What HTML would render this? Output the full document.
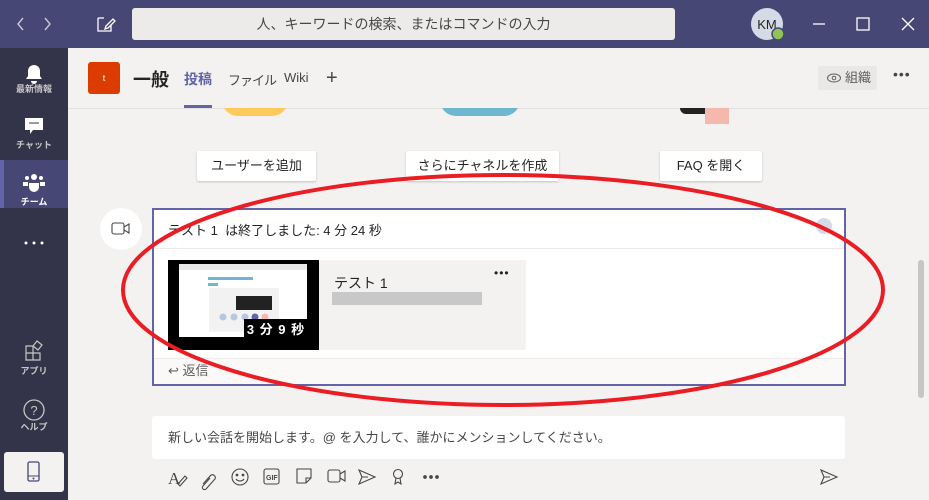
<!DOCTYPE html>
<html><head><meta charset="utf-8"><style>
*{box-sizing:border-box;margin:0;padding:0}
body{width:929px;height:500px;overflow:hidden;font-family:"Liberation Sans","Noto Sans CJK JP",sans-serif;background:#f3f2f1;position:relative;color:#252423}
.abs{position:absolute}
.top{left:0;top:0;width:929px;height:48px;background:#464775}
.search{left:132px;top:8px;width:543px;height:32px;background:#edebe9;border-radius:3px;font-size:14px;color:#484644;text-align:center;line-height:32px}
.rail{left:0;top:48px;width:68px;height:452px;background:#33344a}
.ri{position:absolute;left:0;width:68px;text-align:center;color:#c8c6c4;font-size:9px;font-weight:bold}
.btn{position:absolute;top:151px;height:30px;background:#fff;box-shadow:0 1px 2px rgba(0,0,0,.2);border-radius:2px;font-size:13px;text-align:center;line-height:30px}
</style></head><body>
<div class="abs top"></div>
<svg class="abs" style="left:0;top:0" width="929" height="48">
<path d="M23 18l-5 6 5 6M45 18l5 6-5 6" stroke="#c8c6d8" stroke-width="1.4" fill="none"/>
<path d="M98 18h6M98 18v13h13v-6M108 28l-3 1 1-3 7-7 2 2z" stroke="#fff" stroke-width="1.3" fill="none"/>
<circle cx="767" cy="24" r="16" fill="#d4dbe6"/>
<text x="767" y="29" font-size="13" text-anchor="middle" fill="#252423" font-family="Liberation Sans">KM</text>
<circle cx="778" cy="34" r="6" fill="#92c353" stroke="#464775" stroke-width="1.5"/>
<path d="M813 24h12" stroke="#fff" stroke-width="1.3"/>
<rect x="857" y="18" width="12" height="12" fill="none" stroke="#fff" stroke-width="1.3"/>
<path d="M902 18l12 12M914 18l-12 12" stroke="#fff" stroke-width="1.3"/>
</svg>
<div class="abs search">人、キーワードの検索、またはコマンドの入力</div>
<div class="abs rail"></div>
<div class="abs" style="left:0;top:160px;width:68px;height:48px;background:#464775"></div>
<div class="abs" style="left:0;top:160px;width:4px;height:48px;background:#6264a7"></div>
<svg class="abs" style="left:0;top:48px" width="68" height="452">
<path d="M28 23a6 6 0 0112 0v5l2 3H26l2-3z M31 33a3 3 0 006 0" fill="#fff"/>
<path d="M25 70h18v12h-10l-3 4v-4h-5z" fill="#fff"/><path d="M29 75h10" stroke="#33344a"/>
<circle cx="34" cy="129" r="3" fill="#fff"/><circle cx="27" cy="130" r="2" fill="#fff"/><circle cx="41" cy="130" r="2" fill="#fff"/><path d="M29 135h10v4a5 5 0 01-10 0zM23 134h5v4h-5zM40 134h5v4h-5z" fill="#fff"/>
<circle cx="26" cy="195" r="1.5" fill="#fff"/><circle cx="34" cy="195" r="1.5" fill="#fff"/><circle cx="42" cy="195" r="1.5" fill="#fff"/>
<path d="M26 298h7v7h-7zM26 305h7v7h-7zM33 305h7v7h-7zM33 298l4-5 5 4-4 5z" fill="none" stroke="#c8c6c4" stroke-width="1.2"/>
<circle cx="34" cy="362" r="10" fill="none" stroke="#c8c6c4" stroke-width="1.3"/>
<text x="34" y="367" font-size="13" text-anchor="middle" fill="#c8c6c4">?</text>
</svg>
<div class="ri" style="top:82px">最新情報</div>
<div class="ri" style="top:138px">チャット</div>
<div class="ri" style="top:195px;color:#fff">チーム</div>
<div class="ri" style="top:364px">アプリ</div>
<div class="ri" style="top:420px">ヘルプ</div>
<div class="abs" style="left:4px;top:452px;width:60px;height:40px;background:#f3f2f1;border-radius:3px"></div>
<svg class="abs" style="left:26px;top:461px" width="16" height="22"><rect x="2" y="1" width="11" height="19" rx="1.5" fill="none" stroke="#464775" stroke-width="1.3"/><path d="M2 15h11" stroke="#464775"/><circle cx="7.5" cy="17.5" r="1" fill="#464775"/></svg>

<div class="abs" style="left:68px;top:108px;width:861px;height:1px;background:#e1dfdd"></div>
<div class="abs" style="left:88px;top:62px;width:32px;height:32px;background:#dc3c00;border-radius:3px;color:#fff;font-size:9px;text-align:center;line-height:32px">t</div>
<div class="abs" style="left:133px;top:66px;font-size:18px;font-weight:bold">一般</div>
<div class="abs" style="left:184px;top:69px;font-size:14px;color:#6264a7;font-weight:bold">投稿</div>
<div class="abs" style="left:184px;top:105px;width:28px;height:3px;background:#6264a7"></div>
<div class="abs" style="left:228px;top:70px;font-size:13px;color:#484644;letter-spacing:-1px">ファイル</div>
<div class="abs" style="left:284px;top:70px;font-size:13px;color:#484644">Wiki</div>
<div class="abs" style="left:326px;top:66px;font-size:20px;color:#484644;line-height:24px">+</div>
<div class="abs" style="left:818px;top:66px;width:59px;height:24px;background:#e9e8e6;border-radius:2px;font-size:13px;color:#605e5c;line-height:24px;padding-left:27px">組織</div>
<svg class="abs" style="left:826px;top:73px" width="16" height="10"><ellipse cx="8" cy="5" rx="6.5" ry="4" fill="none" stroke="#605e5c"/><circle cx="8" cy="5" r="1.8" fill="none" stroke="#605e5c"/></svg>
<div class="abs" style="left:893px;top:66px;font-size:14px;color:#484644;letter-spacing:1px">•••</div>

<div class="abs" style="left:222px;top:100px;width:66px;height:16px;border-radius:0 0 33px 33px;background:#fdca5c;clip-path:inset(8px 0 0 0)"></div>
<div class="abs" style="left:440px;top:100px;width:80px;height:16px;border-radius:0 0 40px 40px;background:#6fb6d1;clip-path:inset(8px 0 0 0)"></div>
<div class="abs" style="left:680px;top:108px;width:30px;height:6px;background:#222;border-radius:0 0 10px 10px"></div>
<div class="abs" style="left:705px;top:108px;width:24px;height:16px;background:#f5b8ad"></div>

<div class="btn" style="left:197px;width:119px">ユーザーを追加</div>
<div class="btn" style="left:406px;width:153px">さらにチャネルを作成</div>
<div class="btn" style="left:660px;width:102px">FAQ を開く</div>

<div class="abs" style="left:100px;top:208px;width:42px;height:42px;background:#fff;border-radius:50%"></div>
<svg class="abs" style="left:110px;top:219px" width="22" height="20"><rect x="2" y="4" width="12" height="11" rx="2" fill="none" stroke="#484644" stroke-width="1.1"/><path d="M14 8l5-3v9l-5-3" fill="none" stroke="#484644" stroke-width="1.1"/></svg>
<div class="abs" style="left:152px;top:208px;width:694px;height:178px;border:2px solid #6264a7;background:#fff"></div>
<div class="abs" style="left:154px;top:248px;width:690px;height:1px;background:#edebe9"></div>
<div class="abs" style="left:168px;top:220px;font-size:13px">テスト 1&nbsp; は終了しました: 4 分 24 秒</div>
<div class="abs" style="left:816px;top:218px;width:16px;height:16px;border-radius:50%;background:#d4dbe6"></div>
<div class="abs" style="left:168px;top:260px;width:358px;height:90px;background:#f3f2f1"></div>
<div class="abs" style="left:168px;top:260px;width:151px;height:90px;background:#000"></div>
<div class="abs" style="left:179px;top:264px;width:128px;height:73px;background:#fff"></div>
<div class="abs" style="left:179px;top:264px;width:128px;height:6px;background:#e8e8e8"></div>
<div class="abs" style="left:208px;top:277px;width:45px;height:3px;background:#6fb6d1"></div>
<div class="abs" style="left:208px;top:283px;width:10px;height:3px;background:#6fb6d1"></div>
<div class="abs" style="left:209px;top:288px;width:70px;height:44px;background:#f2f2f2"></div>
<div class="abs" style="left:236px;top:296px;width:36px;height:14px;background:#222"></div>
<svg class="abs" style="left:218px;top:312px" width="60" height="10"><circle cx="5" cy="5" r="3.5" fill="#b9c6e0"/><circle cx="16" cy="5" r="3.5" fill="#b9c6e0"/><circle cx="27" cy="5" r="3.5" fill="#b9c6e0"/><circle cx="37" cy="5" r="3.5" fill="#6264a7"/><circle cx="47" cy="5" r="3.5" fill="#f5b8ad"/></svg>
<div class="abs" style="left:244px;top:319px;width:64px;height:22px;background:#000;color:#fff;font-size:13px;font-weight:bold;line-height:22px;text-align:center;letter-spacing:1px">3 分 9 秒</div>
<div class="abs" style="left:334px;top:273px;font-size:14px">テスト 1</div>
<div class="abs" style="left:332px;top:292px;width:150px;height:13px;background:#c8c8c8"></div>
<div class="abs" style="left:494px;top:266px;font-size:12px;letter-spacing:1px">•••</div>
<div class="abs" style="left:154px;top:358px;width:690px;height:26px;background:#faf9f8;border-top:1px solid #edebe9;font-size:13px;color:#605e5c;line-height:24px;padding-left:14px">↩ 返信</div>

<div class="abs" style="left:152px;top:416px;width:693px;height:43px;background:#fff;border-radius:3px;font-size:13px;color:#484644;line-height:43px;padding-left:16px">新しい会話を開始します。@ を入力して、誰かにメンションしてください。</div>
<svg class="abs" style="left:160px;top:462px" width="690" height="30" fill="none" stroke="#484644" stroke-width="1.1">
<text x="8" y="22" font-size="17" fill="#484644" stroke="none" font-family="Liberation Serif">A</text><path d="M18 22l7-8 2 2-7 8z"/>
<path d="M43 22l8-9a3 3 0 014 4l-9 10a2 2 0 01-3-3l7-8"/>
<circle cx="80" cy="15" r="8"/><circle cx="77" cy="13" r=".8" fill="#484644"/><circle cx="83" cy="13" r=".8" fill="#484644"/><path d="M76 17a5 5 0 008 0"/>
<rect x="104" y="7" width="15" height="15" rx="2"/><text x="106" y="18" font-size="7" fill="#484644" stroke="none" font-weight="bold">GIF</text>
<path d="M137 7h14v9l-5 5h-9z M146 21v-5h5"/>
<rect x="168" y="8" width="12" height="12" rx="2"/><path d="M180 12l5-3v10l-5-3"/>
<path d="M199 8l16 7-16 7 3-7z M202 15h6"/>
<circle cx="238" cy="12" r="4.5"/><path d="M236 16l-1 6 3-2 3 2-1-6"/>
<circle cx="265" cy="15" r="1.3" fill="#484644"/><circle cx="271" cy="15" r="1.3" fill="#484644"/><circle cx="277" cy="15" r="1.3" fill="#484644"/>
<path d="M661 8l16 7-16 7 3-7z M664 15h6"/>
</svg>
<div class="abs" style="left:918px;top:260px;width:6px;height:138px;background:#c8c6c4;border-radius:3px"></div>

<svg class="abs" style="left:0;top:0" width="929" height="500"><ellipse cx="503" cy="290" rx="380" ry="115" fill="none" stroke="#ea1c24" stroke-width="4"/></svg>
</body></html>
